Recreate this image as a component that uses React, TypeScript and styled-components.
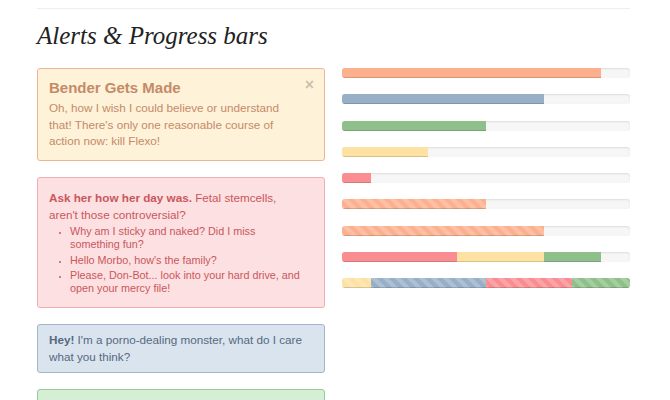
import React from "react";
import styled, { createGlobalStyle, css } from "styled-components";

const Global = createGlobalStyle`
  html, body { margin: 0; padding: 0; background: #fff; }
  body { font-family: "Liberation Sans", Arial, sans-serif; font-size: 12px; }
`;

const Page = styled.div`
  width: 593px;
  padding: 8px 0 0 37px;
`;

const Rule = styled.hr`
  margin: 0;
  border: 0;
  border-top: 1px solid #eeeeee;
  height: 0;
`;

const Heading = styled.h2`
  margin: 12px 0 17px;
  font-family: "Liberation Serif", Georgia, serif;
  font-style: italic;
  font-weight: normal;
  font-size: 25px;
  line-height: 30px;
  color: #222;
`;

const Columns = styled.div`
  display: grid;
  grid-template-columns: 288px 288px;
  column-gap: 17px;
  align-items: start;
`;

const Stack = styled.div`
  display: flex;
  flex-direction: column;
  gap: 16.5px;
`;

type Tone = "warning" | "error" | "info" | "success";

const tones: Record<Tone, { bg: string; border: string; color: string }> = {
  warning: { bg: "#fef2d9", border: "#ebb895", color: "#c58a67" },
  error: { bg: "#fde0e1", border: "#f1aeb1", color: "#c9575d" },
  info: { bg: "#d9e4ef", border: "#a2b5c9", color: "#56697f" },
  success: { bg: "#d4efd3", border: "#9cc999", color: "#5b8a58" },
};

const Alert = styled.div<{ $tone: Tone; $padRight: number; $pad: string }>`
  position: relative;
  border-radius: 3px;
  border: 1px solid ${(p) => tones[p.$tone].border};
  background: ${(p) => tones[p.$tone].bg};
  color: ${(p) => tones[p.$tone].color};
  padding: ${(p) => p.$pad};
  padding-left: 11px;
  padding-right: ${(p) => p.$padRight}px;
  line-height: 16.5px;
  font-size: 11.7px;
  strong { font-weight: bold; }
`;

const AlertTitle = styled.h4`
  margin: 0 0 2px;
  font-size: 15px;
  line-height: 20px;
  font-weight: bold;
`;

const Text = styled.p`
  margin: 0;
`;

const Close = styled.span`
  position: absolute;
  top: 7px;
  right: 10px;
  font-size: 16px;
  font-weight: bold;
  line-height: 18px;
  color: #000;
  opacity: 0.2;
`;

const List = styled.ul`
  margin: 0;
  padding: 0 0 0 21px;
  li {
    line-height: 13px;
    margin: 2.5px 0 0;
    font-size: 10.8px;
  }
  li:first-child { margin-top: 2.25px; }
  li::marker { font-size: 8px; }
`;

const stripes = css`
  background-image: linear-gradient(
    45deg,
    rgba(255, 255, 255, 0.2) 25%,
    transparent 25%,
    transparent 50%,
    rgba(255, 255, 255, 0.2) 50%,
    rgba(255, 255, 255, 0.2) 75%,
    transparent 75%,
    transparent
  );
  background-size: 12px 12px;
`;

const Bars = styled.div`
  display: flex;
  flex-direction: column;
  gap: 16.25px;
`;

const Track = styled.div`
  display: flex;
  height: 10px;
  border-radius: 3px;
  overflow: hidden;
  background: #f6f6f6;
  box-shadow: inset 0 1px 2px rgba(0, 0, 0, 0.1);
`;

type Col = "orange" | "blue" | "green" | "yellow" | "red";
const fills: Record<Col, string> = {
  orange: "#fdb08e",
  blue: "#98afc8",
  green: "#8fc08b",
  yellow: "#fde2a3",
  red: "#f98d92",
};

const Fill = styled.div<{ $c: Col; $striped?: boolean }>`
  height: 100%;
  background-color: ${(p) => fills[p.$c]};
  box-shadow: inset 0 -1px 0 rgba(0, 0, 0, 0.15);
  ${(p) => p.$striped && stripes}
`;

type Seg = { c: Col; w: number };
const bars: { segs: Seg[]; striped?: boolean }[] = [
  { segs: [{ c: "orange", w: 90 }] },
  { segs: [{ c: "blue", w: 70 }] },
  { segs: [{ c: "green", w: 50 }] },
  { segs: [{ c: "yellow", w: 30 }] },
  { segs: [{ c: "red", w: 10 }] },
  { segs: [{ c: "orange", w: 50 }], striped: true },
  { segs: [{ c: "orange", w: 70 }], striped: true },
  { segs: [{ c: "red", w: 40 }, { c: "yellow", w: 30 }, { c: "green", w: 20 }] },
  {
    segs: [
      { c: "yellow", w: 10 },
      { c: "blue", w: 40 },
      { c: "red", w: 30 },
      { c: "green", w: 20 },
    ],
    striped: true,
  },
];

export default function App() {
  return (
    <Page>
      <Global />
      <Rule />
      <Heading>Alerts &amp; Progress bars</Heading>
      <Columns>
        <Stack>
          <Alert $tone="warning" $padRight={35} $pad="9px 0 10px">
            <Close>×</Close>
            <AlertTitle>Bender Gets Made</AlertTitle>
            <Text>
              Oh, how I wish I could believe or understand that! There's only
              one reasonable course of action now: kill Flexo!
            </Text>
          </Alert>
          <Alert $tone="error" $padRight={20} $pad="12px 0 11.5px">
            <Text>
              <strong>Ask her how her day was.</strong> Fetal stemcells, aren't
              those controversial?
            </Text>
            <List>
              <li>Why am I sticky and naked? Did I miss something fun?</li>
              <li>Hello Morbo, how's the family?</li>
              <li>
                Please, Don-Bot... look into your hard drive, and open your
                mercy file!
              </li>
            </List>
          </Alert>
          <Alert $tone="info" $padRight={12} $pad="7px 0 6.5px">
            <Text>
              <strong>Hey!</strong> I'm a porno-dealing monster, what do I care
              what you think?
            </Text>
          </Alert>
          <Alert $tone="success" $padRight={12} $pad="7px 0 6.5px">
            <Text>
              <strong>Splendid!</strong> Good news, everyone! There's a report on
              TV with some very bad news!
            </Text>
          </Alert>
        </Stack>
        <Bars>
          {bars.map((b, i) => (
            <Track key={i}>
              {b.segs.map((s, j) => (
                <Fill
                  key={j}
                  $c={s.c}
                  $striped={b.striped}
                  style={{ width: `${s.w}%` }}
                />
              ))}
            </Track>
          ))}
        </Bars>
      </Columns>
    </Page>
  );
}
